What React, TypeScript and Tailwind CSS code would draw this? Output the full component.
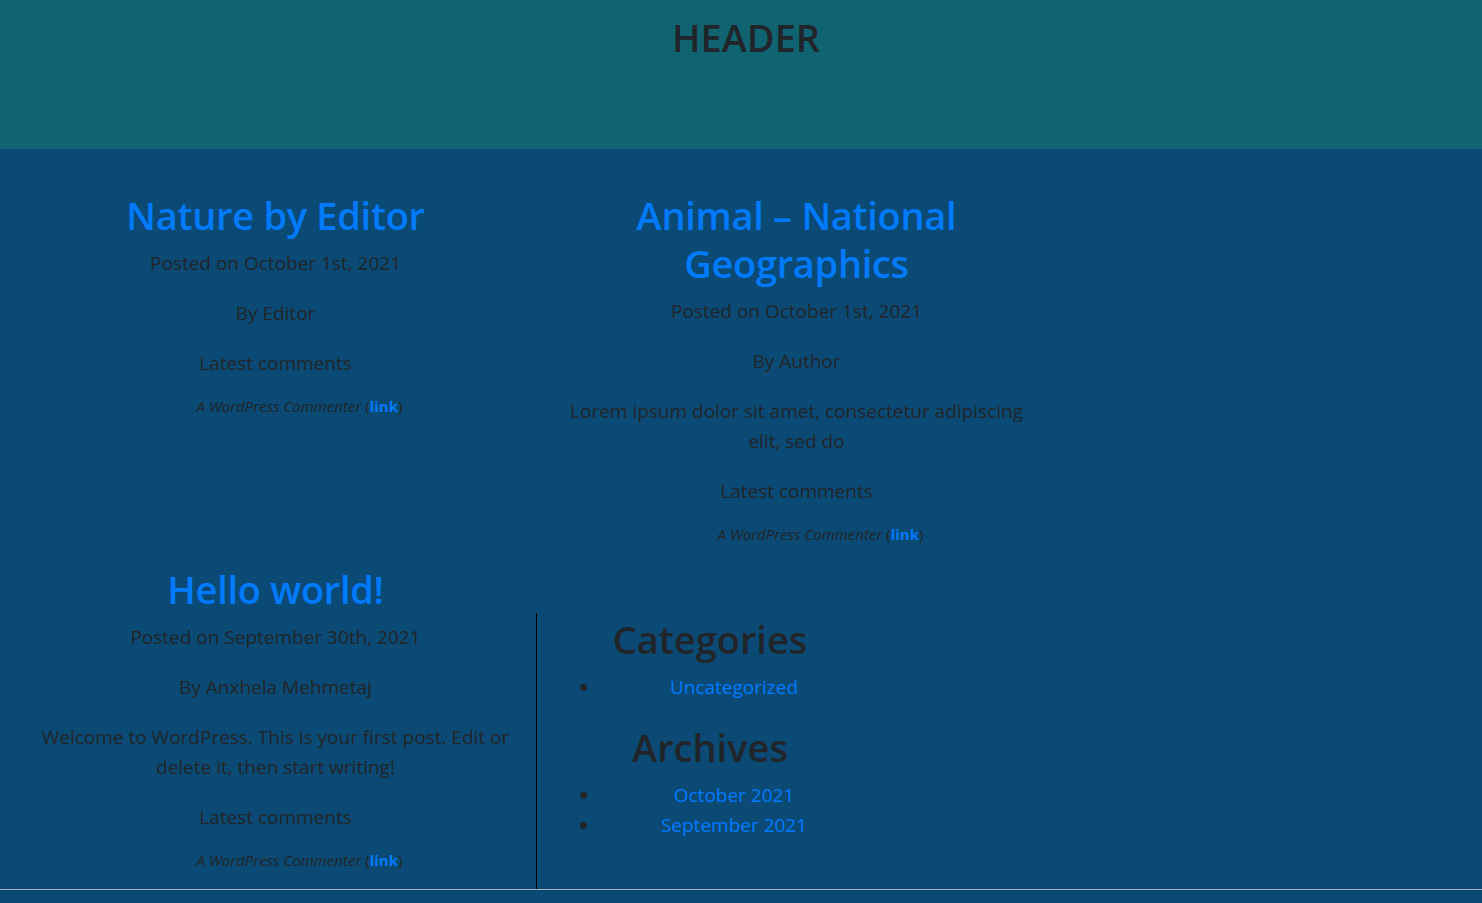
import type { ReactNode } from "react";

const font = { fontFamily: '"Open Sans", "Noto Sans", sans-serif' };

function Commenter() {
  return (
    <ul className="mb-[18px] pl-12 text-[15px] leading-[21px] italic font-medium list-none">
      <li>
        A WordPress Commenter <span className="not-italic">(</span>
        <a className="font-bold not-italic text-[#007bff]">link</a>
        <span className="not-italic">)</span>
      </li>
    </ul>
  );
}

function Post({ title, date, author, excerpt }: { title: ReactNode; date: string; author: string; excerpt?: string }) {
  return (
    <article className="w-[521px] px-[17px] text-center">
      <h2 className="mb-[9px] text-[38px] leading-[48px] font-semibold tracking-[-0.3px] text-[#007bff]">{title}</h2>
      <p className="mb-5 text-[19px] leading-[30px]">Posted on {date}</p>
      <p className="mb-5 text-[19px] leading-[30px]">By {author}</p>
      {excerpt && <p className="mb-5 text-[19px] leading-[30px]">{excerpt}</p>}
      <p className="mb-[18px] text-[19px] leading-[30px]">Latest comments</p>
      <Commenter />
    </article>
  );
}

function Widget({ title, items }: { title: string; items: string[] }) {
  return (
    <section className="text-center">
      <h2 className="mt-[2px] mb-[9px] text-[38px] leading-[48px] font-semibold">{title}</h2>
      <ul className="mb-[21px] list-disc pl-12 text-left">
        {items.map((it) => (
          <li key={it} className="text-center text-[19px] leading-[30px]">
            <a className="text-[#007bff]">{it}</a>
          </li>
        ))}
      </ul>
    </section>
  );
}

export default function App() {
  return (
    <div className="min-h-[903px] bg-[#0b4a74] text-[#212529]" style={font}>
      <header className="h-[149px] bg-[#106471] pt-[13px] pl-[10px] text-center">
        <h1 className="text-[38px] leading-[48px] font-semibold">HEADER</h1>
      </header>

      <main className="border-b border-[#a9b3bb] px-[15px] pt-[42px]">
        <div className="flex items-start">
          <Post title="Nature by Editor" date="October 1st, 2021" author="Editor" />
          <Post
            title={<>Animal – National Geographics</>}
            date="October 1st, 2021"
            author="Author"
            excerpt="Lorem ipsum dolor sit amet, consectetur adipiscing elit, sed do"
          />
        </div>
        <div className="mt-[2px] flex">
          <Post
            title="Hello world!"
            date="September 30th, 2021"
            author="Anxhela Mehmetaj"
            excerpt="Welcome to WordPress. This is your first post. Edit or delete it, then start writing!"
          />
          <aside className="mt-[48px] w-[347px] border-l border-black px-[15px]">
            <Widget title="Categories" items={["Uncategorized"]} />
            <Widget title="Archives" items={["October 2021", "September 2021"]} />
          </aside>
        </div>
      </main>
    </div>
  );
}
